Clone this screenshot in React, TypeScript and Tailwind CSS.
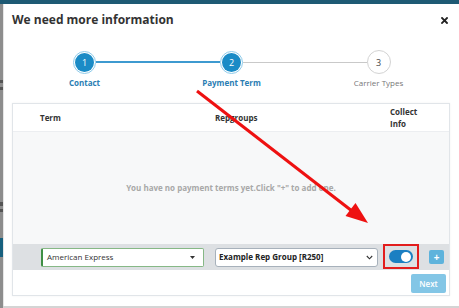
import React from "react";

const font = { fontFamily: '"Open Sans", "Noto Sans", "Liberation Sans", sans-serif' };

function Step({
  n,
  label,
  state,
  leftColor,
  rightColor,
}: {
  n: number;
  label: string;
  state: "done" | "todo";
  leftColor: string;
  rightColor: string;
}) {
  return (
    <div className="w-[147px] flex flex-col items-center">
      <div className="w-full h-[24px] flex items-center">
        <div className={`flex-1 ${leftColor}`} />
        {state === "done" ? (
          <div className="w-[23px] h-[23px] rounded-full border border-[#8ecbea] bg-white p-[1px] flex">
            <div className="flex-1 rounded-full bg-[#1a8bc6] flex items-center justify-center text-white text-[9px] leading-none">
              {n}
            </div>
          </div>
        ) : (
          <div className="w-[24px] h-[24px] rounded-full border border-[#d3d3d3] bg-white flex items-center justify-center text-[#444] text-[9px] leading-none">
            {n}
          </div>
        )}
        <div className={`flex-1 ${rightColor}`} />
      </div>
      <div
        className={`mt-[3px] text-[8px] leading-[12px] ${
          state === "done" ? "font-bold text-[#2a7db3]" : "text-[#777]"
        }`}
      >
        {label}
      </div>
    </div>
  );
}

export default function App() {
  return (
    <div
      className="w-[459px] h-[308px] bg-[#d4d4d4] flex flex-col overflow-hidden relative"
      style={font}
    >
      <div className="h-[4px] bg-[#1e5a74] shrink-0" />
      <div className="flex flex-1 min-h-0">
        <div className="w-[3px] bg-[#8d8d8d] flex flex-col">
          <div className="h-[76px]" />
          <div className="h-[3px] bg-[#555]" />
          <div className="h-[4px]" />
          <div className="h-[3px] bg-[#555]" />
          <div className="h-[112px]" />
          <div className="h-[4px] bg-[#555]" />
          <div className="h-[3px]" />
          <div className="h-[3px] bg-[#555]" />
          <div className="h-[26px]" />
          <div className="h-[19px] bg-[#17607e]" />
        </div>
        <div className="flex-1 flex flex-col">
          <div className="h-[302px] bg-white flex flex-col border-l border-[#e6e6e6]">
            {/* header */}
            <div className="h-[32px] flex items-center justify-between pl-[8px] pr-[11px]">
              <div className="text-[12px] font-bold text-[#333] leading-none">
                We need more information
              </div>
              <svg width="7" height="7" viewBox="0 0 7 7">
                <path d="M1 1 L6 6 M6 1 L1 6" stroke="#222" strokeWidth="1.8" strokeLinecap="square" />
              </svg>
            </div>

            {/* stepper */}
            <div className="mt-[14px] flex pl-[7px]">
              <Step n={1} label="Contact" state="done" leftColor="" rightColor="h-[1.5px] bg-[#3d9ad0]" />
              <Step
                n={2}
                label="Payment Term"
                state="done"
                leftColor="h-[1.5px] bg-[#3d9ad0]"
                rightColor="h-[1px] bg-[#c9c9c9]"
              />
              <Step n={3} label="Carrier Types" state="todo" leftColor="h-[1px] bg-[#c9c9c9]" rightColor="" />
            </div>

            {/* panel */}
            <div className="mt-[14px] ml-[8px] mr-[9px] h-[193px] border border-[#e1e5e9] flex flex-col shadow-[0_0_2px_rgba(0,0,0,0.06)]">
              <div className="h-[28px] border-b border-[#eceef1] flex items-center pl-[27px] text-[8px] font-bold text-[#333]">
                <div className="w-[175px]">Term</div>
                <div className="w-[175px]">Repgroups</div>
                <div className="leading-[12px]">
                  <div>Collect</div>
                  <div>Info</div>
                </div>
              </div>
              <div className="h-[112px] bg-[#f7f8f9] flex items-center justify-center">
                <div className="text-[8px] font-bold text-[#a8a8a8]">
                  You have no payment terms yet.Click "+" to add one.
                </div>
              </div>
              <div className="h-[26px] bg-[#dde0e3] flex items-center pl-[28px]">
                <div className="w-[163px] h-[19px] bg-white border border-[#86b886] border-l-2 border-l-[#3f8f45] rounded-[2px] flex items-center justify-between pl-[4px] pr-[8px]">
                  <span className="text-[8px] text-[#333]">American Express</span>
                  <svg width="5" height="3" viewBox="0 0 5 3">
                    <path d="M0 0 L5 0 L2.5 3 Z" fill="#333" />
                  </svg>
                </div>
                <div className="ml-[11px] w-[163px] h-[19px] bg-white border border-[#a7b1bb] rounded-[3px] flex items-center justify-between pl-[3px] pr-[4px]">
                  <span className="text-[8px] font-bold text-[#222]">Example Rep Group [R250]</span>
                  <svg width="7" height="5" viewBox="0 0 7 5">
                    <path d="M0.8 1 L3.5 3.8 L6.2 1" stroke="#333" strokeWidth="1.1" fill="none" />
                  </svg>
                </div>
                <div className="ml-[5px] self-start w-[36px] h-[25px] border-2 border-[#e21d1d] flex items-center justify-center">
                  <div className="w-[24px] h-[13px] rounded-full bg-[#1b7fc2] flex items-center justify-end pr-[2px]">
                    <div className="w-[10px] h-[10px] rounded-full bg-white" />
                  </div>
                </div>
                <div className="ml-[10px] w-[15px] h-[14px] bg-[#5eb3dc] rounded-[2px] flex items-center justify-center text-white text-[10px] font-bold leading-none">
                  +
                </div>
              </div>
              <div className="flex-1 flex justify-end items-start pt-[4px] pr-[3px]">
                <div className="w-[35px] h-[19px] bg-[#83c6e6] rounded-[2px] flex items-center justify-center text-white text-[8px] font-semibold">
                  Next
                </div>
              </div>
            </div>
          </div>
        </div>
      </div>

      {/* annotation arrow */}
      <svg className="absolute left-0 top-0 pointer-events-none" width="459" height="308" viewBox="0 0 459 308">
        <line x1="197" y1="91" x2="352" y2="211" stroke="#ee1111" strokeWidth="3" />
        <polygon points="368,223 345.5,216 355.5,203" fill="#ee1111" />
      </svg>
    </div>
  );
}
